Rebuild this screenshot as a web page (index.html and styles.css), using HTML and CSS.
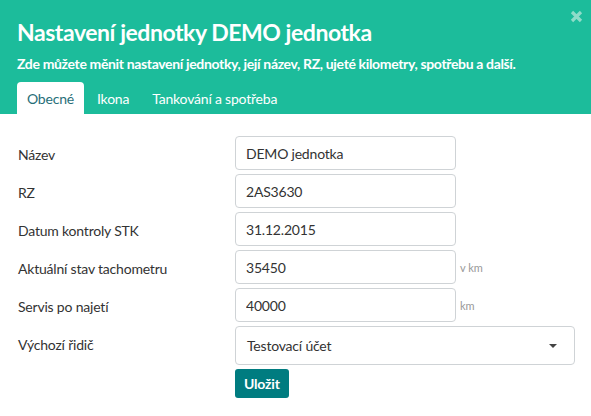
FILE: index.html
```html
<!DOCTYPE html>
<html lang="cs">
<head>
<meta charset="utf-8">
<title>Nastavení jednotky</title>
<link rel="stylesheet" href="styles.css">
</head>
<body>
<div class="modal">
  <header class="hd">
    <button class="close" type="button" aria-label="Zavřít">
      <svg width="13" height="13" viewBox="0 0 13 13"><path d="M2 2 L11 11 M11 2 L2 11" stroke="currentColor" stroke-width="3.2" stroke-linecap="butt"/></svg>
    </button>
    <h1 class="title">Nastavení jednotky DEMO jednotka</h1>
    <p class="sub">Zde můžete měnit nastavení jednotky, její název, RZ, ujeté kilometry, spotřebu a další.</p>
    <nav class="tabs">
      <a class="tab active">Obecné</a>
      <a class="tab">Ikona</a>
      <a class="tab">Tankování a spotřeba</a>
    </nav>
  </header>
  <form class="body">
    <div class="row">
      <label class="lbl">Název</label>
      <div class="ctl"><input class="inp" value="DEMO jednotka"></div>
    </div>
    <div class="row">
      <label class="lbl">RZ</label>
      <div class="ctl"><input class="inp" value="2AS3630"></div>
    </div>
    <div class="row">
      <label class="lbl">Datum kontroly STK</label>
      <div class="ctl"><input class="inp" value="31.12.2015"></div>
    </div>
    <div class="row">
      <label class="lbl">Aktuální stav tachometru</label>
      <div class="ctl"><input class="inp" value="35450"><span class="unit">v km</span></div>
    </div>
    <div class="row">
      <label class="lbl">Servis po najetí</label>
      <div class="ctl"><input class="inp" value="40000"><span class="unit">km</span></div>
    </div>
    <div class="row">
      <label class="lbl">Výchozí řidič</label>
      <div class="ctl"><div class="sel"><span>Testovací účet</span><span class="caret"></span></div></div>
    </div>
    <div class="row">
      <span></span>
      <div class="ctl"><button class="btn" type="button">Uložit</button></div>
    </div>
  </form>
</div>
</body>
</html>
```
FILE: styles.css
```css
* { box-sizing: border-box; }
html, body { margin: 0; padding: 0; background: #fff; }
body { font-family: Lato, "Open Sans", sans-serif; color: #333; width: 591px; height: 416px; overflow: hidden; }
.modal { width: 591px; }
.hd { background: #1cbc9b; padding: 17px 17px 0 17px; position: relative; color: #fff; }
.close { position: absolute; top: 10px; right: 8px; border: 0; background: transparent; padding: 0; color: #8fdcc9; width: 13px; height: 13px; display: block; }
.close svg { display: block; }
.title { margin: 0; font-size: 23px; line-height: 30px; font-weight: 700; letter-spacing: -0.45px; }
.sub { margin: 8px 0 0 0; font-size: 14px; line-height: 18px; font-weight: 700; letter-spacing: -0.35px; }
.tabs { display: flex; gap: 3px; margin-top: 9px; }
.tab { display: block; height: 32px; padding: 0 10px; line-height: 34px; font-size: 14px; font-weight: 400; color: #fff; border-radius: 4px 4px 0 0; letter-spacing: -0.2px; }
.tab.active { background: #fff; color: #276e78; }
.body { display: grid; grid-template-columns: 217px 1fr; row-gap: 4px; padding: 22px 16px 0 18px; }
.row { display: contents; }
.lbl { font-size: 14px; line-height: 31px; padding-top: 3px; color: #333; letter-spacing: -0.2px; }
.ctl { display: flex; align-items: flex-start; gap: 4px; }
.inp { width: 221px; height: 34px; border: 1px solid #cfd3d6; border-radius: 4px; padding: 0 10px; font: 14px Lato, "Open Sans", sans-serif; color: #333; letter-spacing: -0.2px; }
.unit { font-size: 11px; color: #999; padding-top: 11px; }
.sel { width: 340px; height: 39px; border: 1px solid #cfd3d6; border-radius: 4px; padding: 0 11px; display: flex; align-items: center; justify-content: space-between; font-size: 14px; color: #333; letter-spacing: -0.2px; }
.caret { width: 0; height: 0; border-left: 4px solid transparent; border-right: 4px solid transparent; border-top: 4px solid #444; margin-right: 6px; }
.btn { margin-top: 0; border: 0; background: #007c80; color: #fff; font: 700 14px Lato, "Open Sans", sans-serif; height: 29px; padding: 0 9px; border-radius: 3px; letter-spacing: -0.2px; }
```
